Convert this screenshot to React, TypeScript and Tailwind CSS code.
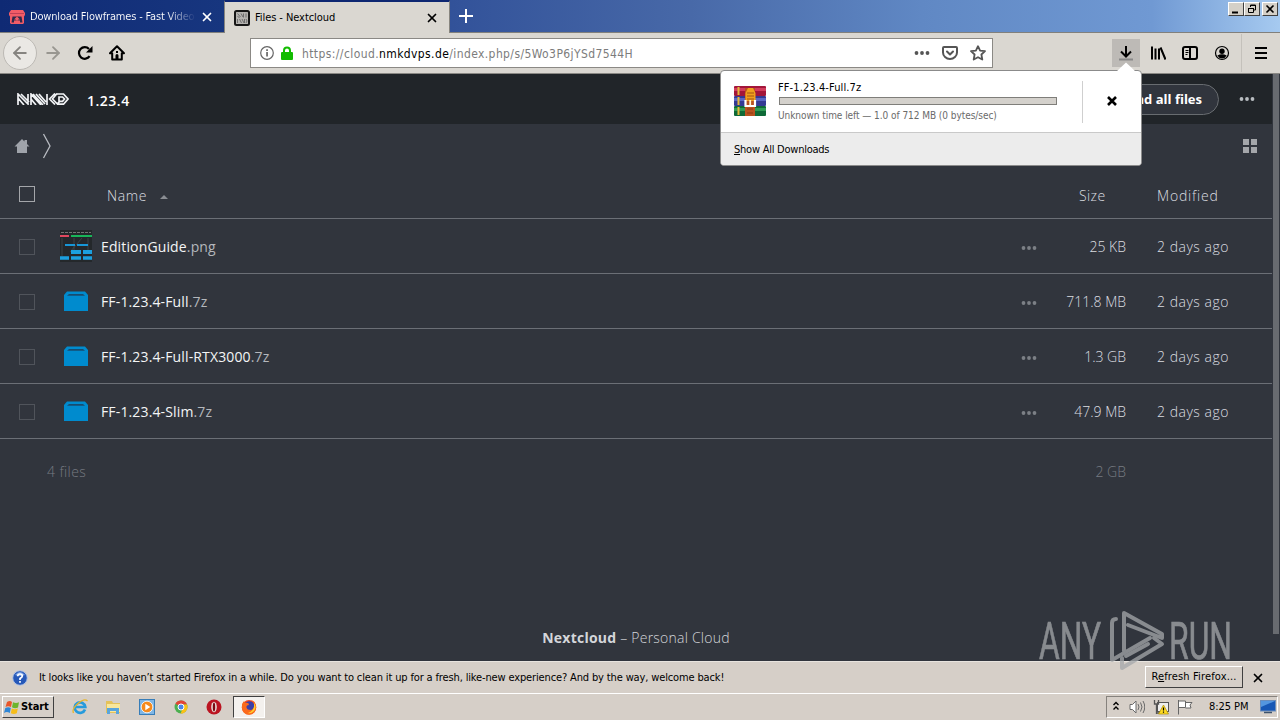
import React from 'react';
import { ArrowLeft, ArrowRight, X } from 'lucide-react';

const files = [
  { name: 'EditionGuide', ext: '.png', size: '25 KB', modified: '2 days ago', kind: 'image' },
  { name: 'FF-1.23.4-Full', ext: '.7z', size: '711.8 MB', modified: '2 days ago', kind: 'archive' },
  { name: 'FF-1.23.4-Full-RTX3000', ext: '.7z', size: '1.3 GB', modified: '2 days ago', kind: 'archive' },
  { name: 'FF-1.23.4-Slim', ext: '.7z', size: '47.9 MB', modified: '2 days ago', kind: 'archive' },
];

const Dots = ({ className }: { className: string }) => (
  <svg viewBox="0 0 16 4" width="16" height="4" fill="currentColor" className={className}>
    <circle cx="2.5" cy="2" r="1.9" />
    <circle cx="8" cy="2" r="1.9" />
    <circle cx="13.5" cy="2" r="1.9" />
  </svg>
);

const ItchIcon = () => (
  <svg viewBox="0 0 16 16" width="16" height="16">
    <path d="M2 1h12l2 3v2l-1 1.500v6.500l-1 1H2l-1-1V7.500L0 6V4z" fill="#f25c67" />
    <path d="M1 4.500h14" stroke="#b23750" strokeWidth=".8" />
    <path d="M3.500 7.500h9l1 6H11v-2H5v2H2.500z" fill="#302a4c" />
    <path d="M8 7.500l3 3H9.300v1H6.700v-1H5z" fill="#f25c67" />
  </svg>
);

const NmkdFavicon = () => (
  <svg viewBox="0 0 16 16" width="16" height="16">
    <rect x="1" y="1" width="14" height="14" rx="1.500" fill="#b5b3b0" stroke="#161616" strokeWidth="2" />
    <path d="M3.500 3.500l3 3.500M3.500 6l2 2M7 3.500l2 3.500M9.500 3.500v4M12 3.500v4M3.500 9v4M5.500 9l2 4M8 9l2 4M10.500 9v4M12 9l1 2-1 2" stroke="#666" strokeWidth=".9" fill="none" />
  </svg>
);

const WindowButton = ({ children }: { children: React.ReactNode }) => (
  <div className="flex h-[14px] w-4 items-center justify-center border border-t-white border-l-white border-r-[#404040] border-b-[#404040] bg-[#d4d0c8]">
    <svg viewBox="0 0 12 10" width="12" height="10" fill="none" stroke="#000">
      {children}
    </svg>
  </div>
);

const TabBar = () => (
  <div className="flex h-[33px] border-b border-[#81807c] bg-[linear-gradient(90deg,#0a246a_0%,#18357c_17%,#33539a_36%,#4869a8_54%,#6088c4_72%,#7099d3_90%,#a6caf0_100%)]">
    <div className="flex h-8 w-[224px] shrink-0 items-center bg-[linear-gradient(90deg,#0f2a74,#17367f)] pt-[2px] pl-[9px]">
      <ItchIcon />
      <span className="ml-[5px] w-[166px] whitespace-nowrap bg-[linear-gradient(90deg,#fff_82%,#14317c_100%)] bg-clip-text pt-px text-[11px] tracking-[-0.17px] text-transparent">
        Download Flowframes - Fast Video
      </span>
      <X className="ml-[4px] h-[14px] w-[14px] text-white" strokeWidth={3} />
    </div>
    <div className="flex h-[33px] w-[226px] shrink-0 items-center border-x border-t-2 border-x-[#87857f] border-t-[#0d2671] bg-[#dad7d1] pl-[9px]">
      <NmkdFavicon />
      <span className="ml-[5px] w-[80px] whitespace-nowrap pt-px text-[11px] tracking-[-0.07px] text-black">Files - Nextcloud</span>
      <X className="ml-[90px] h-[14px] w-[14px] text-black" strokeWidth={3} />
    </div>
    <svg viewBox="0 0 14 14" width="14" height="14" className="mt-[9px] ml-[9px]">
      <path d="M7 0v14M0 7h14" stroke="#fff" strokeWidth="2" />
    </svg>
    <div className="mt-[2px] mr-[2px] ml-auto flex">
      <WindowButton>
        <path d="M2 8.500h6" strokeWidth="2" />
      </WindowButton>
      <WindowButton>
        <path d="M4.500 3V1h5v5H8M2.500 4.500h5v4h-5zM4 1.500h6M2 4.500h6" />
      </WindowButton>
      <div className="ml-[2px]">
        <WindowButton>
          <path d="M2.500 1.500l7 7M9.500 1.500l-7 7" strokeWidth="1.600" />
        </WindowButton>
      </div>
    </div>
  </div>
);

const ReloadIcon = () => (
  <svg viewBox="0 0 16 16" width="16" height="16" fill="none" stroke="#000" strokeWidth="2.200">
    <path d="M12.600 11.200A5.800 5.800 0 1 1 12 4" />
    <path d="M15.500 1v6.500H9z" fill="#000" stroke="none" />
  </svg>
);

const HomeIcon = () => (
  <svg viewBox="0 0 16 16" width="16" height="16">
    <path d="M8 1.300L1 8.200h2.200V14.500h9.600V8.200H15z" fill="none" stroke="#000" strokeWidth="2" strokeLinejoin="round" />
    <path d="M6.500 15v-4.500a1.500 1.500 0 0 1 3 0V15zM7 6h2v2H7z" fill="#000" />
  </svg>
);

const PocketIcon = () => (
  <svg viewBox="0 0 16 16" width="16" height="16" fill="none" stroke="#555" strokeWidth="2" strokeLinecap="round" strokeLinejoin="round">
    <path d="M2 2h12a1 1 0 0 1 1 1v4.500a7 6.500 0 0 1-14 0V3a1 1 0 0 1 1-1z" />
    <path d="M5 6.500l3 3 3-3" />
  </svg>
);

const StarIcon = () => (
  <svg viewBox="0 0 16 16" width="16" height="16" fill="none" stroke="#555" strokeWidth="1.800" strokeLinejoin="round">
    <path d="M8 1.200l2.100 4.400 4.900.6-3.600 3.300.9 5L8 12.200l-4.300 2.300.9-5L1 6.200l4.900-.6z" />
  </svg>
);

const Toolbar = () => (
  <div className="flex h-[41px] items-center border-b border-[#8a8884] bg-[#dad7d1]">
    <div className="ml-[3px] flex h-[34px] w-[34px] items-center justify-center rounded-full border border-[#bcb9b4] bg-[#eae8e4]">
      <ArrowLeft className="h-5 w-5 text-[#868480]" strokeWidth={2.2} />
    </div>
    <ArrowRight className="ml-[6px] h-5 w-5 text-[#989690]" strokeWidth={2.2} />
    <div className="ml-[14px] flex gap-4">
      <ReloadIcon />
      <HomeIcon />
    </div>
    <div className="ml-[125px] flex h-[30px] w-[743px] items-center border border-[#8b8985] bg-white pl-[9px]">
      <svg viewBox="0 0 14 14" width="14" height="14">
        <circle cx="7" cy="7" r="6.300" fill="none" stroke="#666" strokeWidth="1.200" />
        <path d="M6.200 6h1.700v4.500H6.200zM6.200 3.200h1.700v1.700H6.200z" fill="#666" />
      </svg>
      <svg viewBox="0 0 12 14" width="12" height="14" className="ml-[7px]">
        <path d="M3 7V4.500a3 3 0 0 1 6 0V7" fill="none" stroke="#12bc00" strokeWidth="2" />
        <rect x="0" y="6" width="12" height="8" rx="1" fill="#12bc00" />
      </svg>
      <span className="ml-[9px] w-[600px] whitespace-nowrap pt-px text-[12px] tracking-[0.4px] text-[#7c7c7c]">
        https://cloud.<span className="text-black">nmkdvps.de</span>/index.php/s/5Wo3P6jYSd7544H
      </span>
      <Dots className="ml-[12px] text-[#555]" />
      <div className="ml-3 flex gap-3">
        <PocketIcon />
        <StarIcon />
      </div>
    </div>
    <div className="ml-[119px] flex h-7 w-7 items-center justify-center bg-[#bdbab6]">
      <svg viewBox="0 0 16 16" width="16" height="16" fill="none" stroke="#000" strokeWidth="2">
        <path d="M8 1v10M3 6.500l5 5 5-5" />
        <path d="M1 14.500h14" stroke="#888" />
      </svg>
    </div>
    <div className="ml-[10px] flex items-center gap-4">
      <svg viewBox="0 0 16 16" width="16" height="16" fill="none" stroke="#000" strokeWidth="2">
        <path d="M2 1.500v13M5.500 3.500v11M9 3.500v11M10.500 2.500l5 12" />
      </svg>
      <svg viewBox="0 0 16 16" width="16" height="16" fill="none" stroke="#000" strokeWidth="2">
        <rect x="1" y="2" width="14" height="12" rx="2" />
        <path d="M8 2v12" />
        <path d="M3.500 5.500h3M3.500 7.500h3M3.500 9.500h2" strokeWidth="1" />
      </svg>
      <svg viewBox="0 0 16 16" width="16" height="16">
        <circle cx="8" cy="8" r="6.500" fill="none" stroke="#000" strokeWidth="1.200" />
        <circle cx="8" cy="6.200" r="2.700" />
        <path d="M3.300 10.500Q8 8 12.700 10.500 11 13.600 8 13.600T3.300 10.500z" />
      </svg>
    </div>
    <div className="ml-[11px] h-[38px] w-px bg-[#c4c1bb]" />
    <svg viewBox="0 0 12 12" width="12" height="12" className="ml-[13px]">
      <path d="M0 1h12M0 6h12M0 11h12" stroke="#000" strokeWidth="2" />
    </svg>
  </div>
);

const WinrarIcon = () => (
  <svg viewBox="0 0 32 32" width="32" height="32">
    <rect x="0" y="1" width="32" height="10" rx="1" fill="#a3163a" />
    <rect x="0" y="3" width="32" height="3" fill="#d23c5c" />
    <rect x="0" y="11" width="32" height="10" rx="1" fill="#343a94" />
    <rect x="0" y="13" width="32" height="3" fill="#5a66c4" />
    <rect x="0" y="21" width="32" height="10" rx="1" fill="#0f6a37" />
    <rect x="0" y="23" width="32" height="3" fill="#2f9b54" />
    <path d="M4.500 2v8M4.500 12v8M4.500 22v8" stroke="#e5b73b" strokeWidth="2" />
    <path d="M11 3h10v28H11z" fill="#b9521f" />
    <path d="M11.500 8l2.500-5h5l2.500 5v8h-10z" fill="#f0a01e" />
    <path d="M13 8h7M13 11h7M13 14h7" stroke="#a45512" />
    <path d="M11.500 15v6h9.500v-6" fill="none" stroke="#fff" strokeWidth="2.200" />
    <path d="M16.200 15v5" stroke="#fff3cf" strokeWidth="1.800" />
    <path d="M13 24h6M13 28h6" stroke="#8a3a12" />
  </svg>
);

const DownloadPopup = () => (
  <div className="absolute top-[70px] left-[720px] z-10 w-[422px] rounded-[4px] border border-[#8b8b8b] bg-white">
    <svg viewBox="0 0 20 10" width="20" height="10" className="absolute -top-[9px] right-[5px]">
      <path d="M0 10l10-9.500L20 10z" fill="#fff" />
    </svg>
    <div className="flex h-[61px]">
      <div className="mt-[14px] ml-[13px]">
        <WinrarIcon />
      </div>
      <div className="ml-3 w-[279px] pt-[9px]">
        <div className="h-[15px] text-[11px] leading-[15px] tracking-[0.1px] text-black">FF-1.23.4-Full.7z</div>
        <div className="mt-[2px] ml-px h-2 border border-[#7f7e7a] bg-[#d4d1cc]" />
        <div className="mt-[3px] whitespace-nowrap text-[10px] leading-[15px] tracking-[-0.05px] text-[#6a6a6a]">
          Unknown time left — 1.0 of 712 MB (0 bytes/sec)
        </div>
      </div>
      <div className="mt-[10px] ml-[25px] h-[42px] w-px bg-[#cfcfcf]" />
      <svg viewBox="0 0 10 10" width="10" height="10" className="mt-[25px] ml-[24px]">
        <path d="M1 1l8 8M9 1L1 9" stroke="#000" strokeWidth="2.600" />
      </svg>
    </div>
    <div className="flex h-[33px] items-center rounded-b-[3px] border-t border-[#c9c9c9] bg-[#ececec] pt-[2px] pl-[13px] text-[11px] tracking-[-0.24px] text-black">
      <span><span className="underline">S</span>how All Downloads</span>
    </div>
  </div>
);

const PageHeader = () => (
  <div className="flex h-[50px] items-center bg-[#212529]">
    <svg viewBox="0 0 52 12" width="52" height="12" className="ml-[17px]" fill="none" stroke="#f1f3f5" strokeWidth="1.700">
      <path d="M1 12V1l10 10V1M4 1l8 8M1 5l6 7M14 12V1l10 11M16 1l10 11M19 1l9 10M22 1l7 8M14 6l5 6M30 12V1M32 6.500l6-6M32 5.500l6 6M35 6.500l5-6M35 5.500l6 6" />
      <path d="M40 1h6.500l4.500 5-4.500 5.200H40M42 4h3.500l2 2-2 2.300H42zM40 11.200l3-3" />
    </svg>
    <span className="mt-[2px] ml-[18px] text-[14px] font-semibold tracking-[0.5px] text-white [font-family:'Open_Sans','Noto_Sans',sans-serif]">1.23.4</span>
    <div className="mt-px ml-auto flex h-[31px] w-[180px] items-center justify-end rounded-full border border-[#686c70] bg-[#31353d] pt-px pr-4 text-[13px] font-bold text-white">
      <span className="whitespace-nowrap">Download all files</span>
    </div>
    <Dots className="mr-[17px] ml-5 text-[#b9bdc1]" />
  </div>
);

const Breadcrumb = () => (
  <div className="flex h-[44px] items-center pl-[14px]">
    <svg viewBox="0 0 16 16" width="16" height="16" fill="#9fa3aa">
      <path d="M8 1L.5 8.500H3V15h10V8.500h2.500L13 6V2h-2.500v1.500z" />
    </svg>
    <svg viewBox="0 0 10 26" width="10" height="26" className="ml-3" fill="none" stroke="#b9bcc2" strokeWidth="1.300">
      <path d="M1.500 1l6.500 12L1.500 25" />
    </svg>
    <svg viewBox="0 0 14 14" width="14" height="14" className="mr-[15px] ml-auto" fill="#a4a6aa">
      <path d="M0 0h6v6H0zM8 0h6v6H8zM0 8h6v6H0zM8 8h6v6H8z" />
    </svg>
  </div>
);

const GuideThumb = () => (
  <svg viewBox="0 0 32 32" width="32" height="32">
    <rect width="32" height="32" fill="#24282b" />
    <path d="M1 2.500h30" stroke="#747474" strokeDasharray="3 1" />
    <path d="M0 6h9" stroke="#e0485e" strokeWidth="2" />
    <path d="M11 6h21" stroke="#19b559" strokeWidth="2" />
    <path d="M2 8v18M14 8v13M22 8l-12 14M28 8v14" stroke="#3c4246" />
    <path d="M5 15h10M17 15h11" stroke="#1796d6" strokeWidth="2" />
    <path d="M11 22h10M23 22h9" stroke="#1ba0df" strokeWidth="4" />
    <path d="M0 28h9M11 28h10M23 28h9" stroke="#1ba0df" strokeWidth="3.500" />
  </svg>
);

const ArchiveIcon = () => (
  <svg viewBox="0 0 24 20" width="24" height="20">
    <path d="M0 4l3-3.500h18L24 4v16H0z" fill="#008bce" />
    <path d="M5 3h14l2 1.700H3z" fill="#174c70" />
  </svg>
);

const FileRow = ({ file }: { file: typeof files[number] }) => (
  <div className="flex h-[55px] items-center border-b border-[#6b6f76]">
    <div className="mt-[2px] ml-[19px] h-4 w-4 border border-[#50545b]" />
    <div className="ml-[25px] flex w-8 justify-center">
      {file.kind === 'image' ? <GuideThumb /> : <ArchiveIcon />}
    </div>
    <span className="ml-[9px] whitespace-nowrap text-[14px] font-normal tracking-[0.14px] text-[#f4f5f6]">
      {file.name}<span className="text-[#b4b7bc]">{file.ext}</span>
    </span>
    <Dots className="mt-[3px] ml-auto text-[#7c8086]" />
    <span className="w-[89px] text-right text-[#dcdee1]">{file.size}</span>
    <span className="ml-[31px] w-[115px] tracking-[0.5px] text-[#dcdee1]">{file.modified}</span>
  </div>
);

const Watermark = () => (
  <svg viewBox="0 0 200 62" width="200" height="62" className="absolute top-[610px] left-[1038px] opacity-75" fill="#a5a8ab">
    <g stroke="#a5a8ab" strokeWidth=".7">
      <text x="1" y="49" fontSize="52" textLength="62" lengthAdjust="spacingAndGlyphs" className="[font-family:Roboto,sans-serif]">ANY</text>
      <text x="131" y="49" fontSize="52" textLength="63" lengthAdjust="spacingAndGlyphs" className="[font-family:Roboto,sans-serif]">RUN</text>
    </g>
    <g fill="none" stroke="#a5a8ab" strokeWidth="4" strokeLinejoin="round" strokeLinecap="round">
      <path d="M78 9q-4 0-4 4v37l38-22" />
      <path d="M86 41V3l38 21v4L90 15" />
      <path d="M84 48v10l40-24-8-6M110 34L88 46" />
    </g>
  </svg>
);

const NextcloudPage = () => (
  <div className="flex h-[587px] bg-[#31353d] [font-family:'Open_Sans','Noto_Sans',sans-serif]">
    <div className="flex w-[1272px] flex-col">
      <PageHeader />
      <Breadcrumb />
      <div className="text-[14px] font-light">
        <div className="flex h-[51px] items-center border-b border-[#6b6f76] text-[#dcdee1]">
          <div className="mt-px ml-[19px] h-4 w-4 border border-[#a4a6aa]" />
          <span className="mt-[5px] ml-[72px] tracking-[0.6px]">Name</span>
          <svg viewBox="0 0 8 5" width="8" height="5" className="mt-[7px] ml-[13px]">
            <path d="M0 5l4-4 4 4z" fill="#8a8d93" />
          </svg>
          <span className="mt-[5px] ml-auto w-[78px] tracking-[0.4px]">Size</span>
          <span className="mt-[5px] w-[115px] tracking-[0.8px]">Modified</span>
        </div>
        {files.map((file) => (
          <FileRow key={file.name} file={file} />
        ))}
        <div className="flex h-[64px] items-center justify-between pr-[146px] pl-[47px] text-[#777b82]">
          <span className="tracking-[0.4px]">4 files</span>
          <span>2 GB</span>
        </div>
      </div>
      <div className="mt-auto mb-[13px] text-center text-[14px] font-light tracking-[0.23px] text-[#d4d6da]">
        <span className="font-bold">Nextcloud</span> – Personal Cloud
      </div>
    </div>
    <div className="ml-px h-[560px] w-[6px] bg-[#686b70]" />
  </div>
);

const RefreshNotice = () => (
  <div className="flex h-[32px] items-center border-t border-[#e8e4df] bg-[#d6cfc8] text-[11px] text-black">
    <svg viewBox="0 0 16 16" width="16" height="16" className="ml-3">
      <circle cx="8" cy="8" r="7.300" fill="#2658b8" stroke="#b5c5e4" />
      <path d="M3 5Q8-1 13 5 8 7 3 5z" fill="#7da3e5" />
      <path d="M5.700 6.200Q5.800 4 8 4t2.300 2Q10.300 7.200 8 8.500V10M8 11v1.700" fill="none" stroke="#fff" strokeWidth="1.700" />
    </svg>
    <span className="ml-[11px] whitespace-nowrap pt-px tracking-[-0.14px]">
      It looks like you haven’t started Firefox in a while. Do you want to clean it up for a fresh, like-new experience? And by the way, welcome back!
    </span>
    <div className="mb-[2px] ml-auto flex h-[22px] w-[98px] items-center justify-center border border-t-white border-l-white border-r-[#404040] border-b-[#404040]">
      <span className="whitespace-nowrap pt-px tracking-[0.15px]">R<span className="underline">e</span>fresh Firefox...</span>
    </div>
    <X className="mr-[15px] ml-[8px] h-[14px] w-[14px]" strokeWidth={3} />
  </div>
);

const WindowsFlag = () => (
  <svg viewBox="0 0 16 15" width="16" height="15">
    <path d="M3 2q3-2 5 0L7 7Q4 5.500 1.500 7z" fill="#e8562a" />
    <path d="M9 2.300q3 1.500 6 0L14 7.500q-3 1.500-6-.2z" fill="#6cb52d" />
    <path d="M1.300 8q3-1.500 5.500 0l-1 5q-3-1.800-5.800 0z" fill="#2e86d6" />
    <path d="M7.800 8.500q3 1.500 6 0l-1 4.800q-3 1.500-6 0z" fill="#f6bd19" />
  </svg>
);

const TaskIcons = () => (
  <div className="flex items-center gap-[17.7px]">
    <svg viewBox="0 0 16 16" width="16" height="16" fill="none">
      <path d="M13 10.500A5.300 5.300 0 1 1 13.300 8H4" stroke="#279bdc" strokeWidth="2.700" />
      <path d="M1.500 14Q-.5 10 6 4.500T15.500 2" stroke="#e7b52b" strokeWidth="1.300" />
    </svg>
    <svg viewBox="0 0 16 16" width="16" height="16">
      <path d="M1 2h6l1 2h7v10H1z" fill="#e5c25a" />
      <path d="M2 5h13v8H2z" fill="#f9e79b" />
      <path d="M2 15V9h12v6h-3v-3H5v3z" fill="#5aa5dc" />
    </svg>
    <svg viewBox="0 0 16 16" width="16" height="16">
      <rect x=".5" y=".5" width="15" height="15" fill="#7fb6e5" stroke="#377db8" />
      <circle cx="8" cy="8" r="5.800" fill="#f58a1d" stroke="#fff" strokeWidth=".8" />
      <path d="M6.300 4.800v6.400L11.300 8z" fill="#fff" />
    </svg>
    <svg viewBox="0 0 16 16" width="16" height="16">
      <circle cx="8" cy="8" r="6.500" fill="#4caf50" />
      <path d="M8 8L2.400 4.700A6.500 6.500 0 0 1 14 5.500H8z" fill="#e24436" />
      <path d="M8 5.500h6a6.500 6.500 0 0 1-6.500 9L10.500 8z" fill="#fbc116" />
      <circle cx="8" cy="8" r="3" fill="#4a86e8" stroke="#fff" />
    </svg>
    <svg viewBox="0 0 16 16" width="16" height="16">
      <circle cx="8" cy="8" r="7.500" fill="#bb1421" />
      <ellipse cx="8" cy="8" rx="2.800" ry="5.300" fill="#e9dfd9" />
      <ellipse cx="8" cy="8" rx="1.200" ry="4.500" fill="#7c0912" />
    </svg>
  </div>
);

const FirefoxIcon = () => (
  <svg viewBox="0 0 16 16" width="16" height="16">
    <circle cx="8" cy="8.300" r="7.200" fill="#f5461e" />
    <circle cx="8.500" cy="7" r="4.800" fill="#3b3fa8" />
    <path d="M1 5l2-3 1 2q4-1 4 2-3 0-2.500 2.500T10 11q3.500-.5 3-6Q13 3 10 1q5 1 5.200 7.500A7 7 0 0 1 1 9z" fill="#fb6a1c" />
    <path d="M13 4q3 4 0 8-3 3-6 2 5-2 6-6z" fill="#ffd02f" />
  </svg>
);

const Tray = () => (
  <div className="mr-[2px] ml-auto flex h-[22px] w-[172px] items-center border border-t-[#86827d] border-l-[#86827d] border-r-white border-b-white">
    <svg viewBox="0 0 6 9" width="6" height="9" className="mb-[3px] ml-[6px]" fill="none" stroke="#000" strokeWidth="1.400">
      <path d="M.5 4L3 1.500 5.500 4M.5 8.500L3 6l2.500 2.500" />
    </svg>
    <svg viewBox="0 0 16 16" width="16" height="16" className="ml-[10px]" fill="none" stroke="#6a6a6a">
      <path d="M1 5.500h2.500L7 2v12l-3.500-3.500H1z" fill="#fff" />
      <path d="M9 5q2 3 0 6M11.500 3.500q3 4.500 0 9M14 2q3.500 6 0 12" />
    </svg>
    <svg viewBox="0 0 16 16" width="16" height="16" className="ml-2">
      <rect x="4.500" y="3.500" width="11" height="9" fill="#eee" stroke="#555" />
      <path d="M1.500 1v4h4V1M3.500 5v10M3.500 14h6" fill="none" stroke="#555" strokeWidth="1.300" />
      <path d="M10.500 6L15.500 15h-10z" fill="#ffdc22" stroke="#ae8c00" strokeWidth=".7" />
      <path d="M10.500 8.500v3M10.500 12.500v1.200" stroke="#000" strokeWidth="1.200" />
    </svg>
    <svg viewBox="0 0 16 16" width="16" height="16" className="ml-2" fill="#fff" stroke="#666">
      <path d="M1.500 1v14.500M2 2h6.500v6.500H2M8.500 3.500H15l-2 2.500 1 3H8.500" />
    </svg>
    <span className="ml-[16px] whitespace-nowrap pt-px text-[11px] tracking-[-0.05px] text-black">8:25 PM</span>
    <svg viewBox="0 0 16 14" width="16" height="14" className="mr-px ml-auto">
      <rect x=".5" y=".5" width="15" height="10.500" fill="#1757b5" stroke="#6b8dba" />
      <path d="M1 1h14L1 7z" fill="#5496df" />
      <path d="M4 12.500h8" stroke="#3c526d" strokeWidth="1.500" />
    </svg>
  </div>
);

const Taskbar = () => (
  <div className="flex h-[27px] items-center border-t border-white bg-[#d6cfc8]">
    <div className="ml-[2px] flex h-[22px] w-[52px] items-center border border-t-white border-l-white border-r-[#404040] border-b-[#404040] pl-px">
      <WindowsFlag />
      <span className="ml-px pt-px text-[11px] font-bold tracking-[-0.1px] text-black">Start</span>
    </div>
    <div className="ml-[17.500px]">
      <TaskIcons />
    </div>
    <div className="ml-[10.700px] flex h-[22px] w-[32px] items-center justify-center border border-t-[#404040] border-l-[#404040] border-r-white border-b-white bg-[#f4f1ee]">
      <FirefoxIcon />
    </div>
    <Tray />
  </div>
);

export default function App() {
  return (
    <div className="relative h-[720px] w-[1280px] overflow-hidden bg-[#31353d] [font-family:'DejaVu_Sans_Condensed','Noto_Sans',sans-serif]">
      <TabBar />
      <Toolbar />
      <NextcloudPage />
      <RefreshNotice />
      <Taskbar />
      <DownloadPopup />
      <Watermark />
    </div>
  );
}
